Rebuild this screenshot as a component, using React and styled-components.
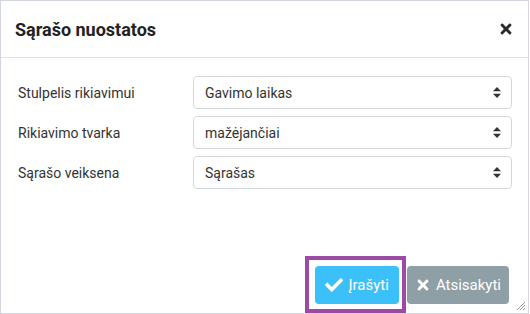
import React from 'react';
import styled, { createGlobalStyle } from 'styled-components';
import { FaCheck, FaTimes } from 'react-icons/fa';

const GlobalStyle = createGlobalStyle`
  html, body {
    margin: 0;
    padding: 0;
    background: #ffffff;
  }
  body {
    font-family: Roboto, "Liberation Sans", Arial, sans-serif;
    color: #333;
  }
`;

const Dialog = styled.div`
  position: relative;
  box-sizing: border-box;
  width: 529px;
  height: 314px;
  border: 1px solid #d2d6de;
  display: flex;
  flex-direction: column;
  background: #fff;
`;

const Header = styled.div`
  height: 56px;
  border-bottom: 1px solid #dfe3e7;
  display: flex;
  align-items: center;
  justify-content: space-between;
  padding: 0 14px 0 14px;
`;

const Title = styled.h4`
  margin: 0;
  font-size: 18px;
  font-weight: 700;
  color: #222;
`;

const Close = styled.button`
  border: none;
  background: none;
  padding: 0;
  display: flex;
  color: #2b2b2b;
  font-size: 16px;
  cursor: pointer;
`;

const Body = styled.div`
  flex: 1;
  padding: 18px 16px 0 17px;
`;

const Form = styled.div`
  display: grid;
  grid-template-columns: 175px 1fr;
  row-gap: 7px;
  align-items: center;
`;

const Label = styled.label`
  font-size: 14px;
  color: #333;
`;

const SelectBox = styled.div`
  display: flex;
  align-items: center;
  height: 33px;
  box-sizing: border-box;
  border: 1px solid #d4d8dc;
  border-radius: 4px;
  padding: 0 10px 0 0;
`;

const Select = styled.select`
  appearance: none;
  flex: 1;
  border: none;
  background: transparent;
  outline: none;
  font-family: inherit;
  font-size: 14px;
  color: #333;
  padding: 0 0 0 11px;
  height: 100%;
`;

const Footer = styled.div`
  display: flex;
  justify-content: flex-end;
  gap: 8px;
  padding: 0 19px 9px 0;
`;

const Highlight = styled.span`
  position: relative;
  display: inline-flex;
  &::after {
    content: '';
    position: absolute;
    top: -10px;
    left: -10px;
    right: -7px;
    bottom: -9px;
    border: 4px solid #9c4aa3;
    pointer-events: none;
  }
`;

const Button = styled.button`
  display: inline-flex;
  align-items: center;
  gap: 5px;
  height: 38px;
  padding: 0 ${({ $pad }) => $pad}px;
  border: none;
  border-radius: 4px;
  background: ${({ $bg }) => $bg};
  color: #fff;
  font-family: inherit;
  font-size: 15px;
  cursor: pointer;
  svg {
    font-size: ${({ $icon }) => $icon}px;
  }
`;

const Grip = styled.svg`
  position: absolute;
  right: 2px;
  bottom: 2px;
`;

const Arrows = () => (
  <svg width="8" height="11" viewBox="0 0 8 11">
    <path d="M4 0 L8 4.3 L0 4.3 Z M0 6.7 L8 6.7 L4 11 Z" fill="#333" />
  </svg>
);

const fields = [
  { label: 'Stulpelis rikiavimui', value: 'Gavimo laikas' },
  { label: 'Rikiavimo tvarka', value: 'mažėjančiai' },
  { label: 'Sąrašo veiksena', value: 'Sąrašas' },
];

export default function App() {
  return (
    <>
      <GlobalStyle />
      <Dialog>
        <Header>
          <Title>Sąrašo nuostatos</Title>
          <Close aria-label="close">
            <FaTimes />
          </Close>
        </Header>
        <Body>
          <Form>
            {fields.map((f) => (
              <React.Fragment key={f.label}>
                <Label>{f.label}</Label>
                <SelectBox>
                  <Select defaultValue={f.value}>
                    <option>{f.value}</option>
                  </Select>
                  <Arrows />
                </SelectBox>
              </React.Fragment>
            ))}
          </Form>
        </Body>
        <Footer>
          <Highlight>
            <Button $bg="#3cc0f9" $pad={10} $icon={18}>
              <FaCheck />
              Įrašyti
            </Button>
          </Highlight>
          <Button $bg="#8e9fa5" $pad={8} $icon={16}>
            <FaTimes />
            Atsisakyti
          </Button>
        </Footer>
        <Grip width="10" height="10" viewBox="0 0 10 10">
          <path d="M9 1 L1 9 M9 4 L4 9 M9 7 L7 9" stroke="#999" strokeWidth="1" />
        </Grip>
      </Dialog>
    </>
  );
}
